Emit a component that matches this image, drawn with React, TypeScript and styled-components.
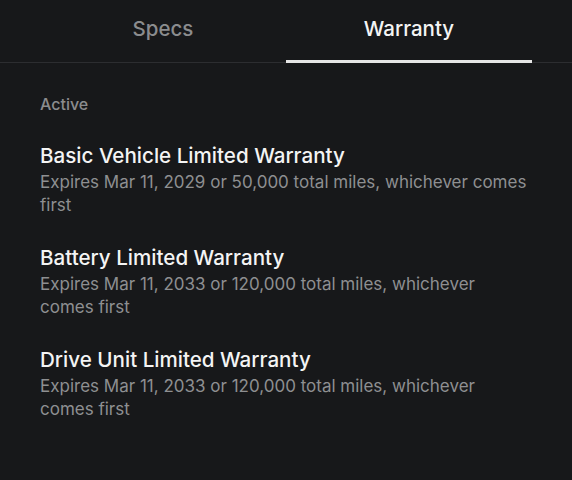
import React from 'react';
import styled, { createGlobalStyle } from 'styled-components';

interface WarrantyItem {
  title: string;
  detail: string;
}

const warranties: WarrantyItem[] = [
  {
    title: 'Basic Vehicle Limited Warranty',
    detail: 'Expires Mar 11, 2029 or 50,000 total miles, whichever comes first',
  },
  {
    title: 'Battery Limited Warranty',
    detail: 'Expires Mar 11, 2033 or 120,000 total miles, whichever comes first',
  },
  {
    title: 'Drive Unit Limited Warranty',
    detail: 'Expires Mar 11, 2033 or 120,000 total miles, whichever comes first',
  },
];

const App: React.FC = () => {
  return (
    <Screen>
      <Global />
      <TabBar>
        <Tab>Specs</Tab>
        <Tab active>Warranty</Tab>
      </TabBar>
      <Content>
        <SectionLabel>Active</SectionLabel>
        {warranties.map(({ title, detail }) => (
          <Item key={title}>
            <ItemTitle>{title}</ItemTitle>
            <ItemDetail>{detail}</ItemDetail>
          </Item>
        ))}
      </Content>
    </Screen>
  );
};

const Global = createGlobalStyle`
  html, body {
    margin: 0;
    padding: 0;
    background: #17181a;
  }
`;

const Screen = styled.div`
  width: 572px;
  height: 480px;
  background: #17181a;
  font-family: Inter, "Liberation Sans", sans-serif;
  overflow: hidden;
`;

const TabBar = styled.div`
  display: grid;
  grid-template-columns: 1fr 1fr;
  padding: 0 40px;
  border-bottom: 1px solid #2c2d30;
`;

const Tab = styled.div<{ active?: boolean }>`
  height: 63px;
  display: flex;
  align-items: center;
  justify-content: center;
  padding-bottom: 4px;
  box-sizing: border-box;
  font-size: 20.5px;
  font-weight: 500;
  color: ${(p) => (p.active ? '#f4f4f4' : '#8b8c8e')};
  border-bottom: 3px solid ${(p) => (p.active ? '#e6e6e6' : 'transparent')};
  margin-bottom: -1px;
`;

const Content = styled.div`
  padding: 31px 40px 0;
`;

const SectionLabel = styled.div`
  font-size: 16px;
  font-weight: 500;
  color: #8b8c8e;
  line-height: 20px;
  margin-bottom: 27px;
`;

const Item = styled.div`
  margin-bottom: 26px;
`;

const ItemTitle = styled.div`
  font-size: 20.6px;
  font-weight: 500;
  color: #f4f4f4;
  line-height: 30px;
`;

const ItemDetail = styled.div`
  font-size: 17px;
  color: #8e8f91;
  line-height: 23px;
`;

export default App;
